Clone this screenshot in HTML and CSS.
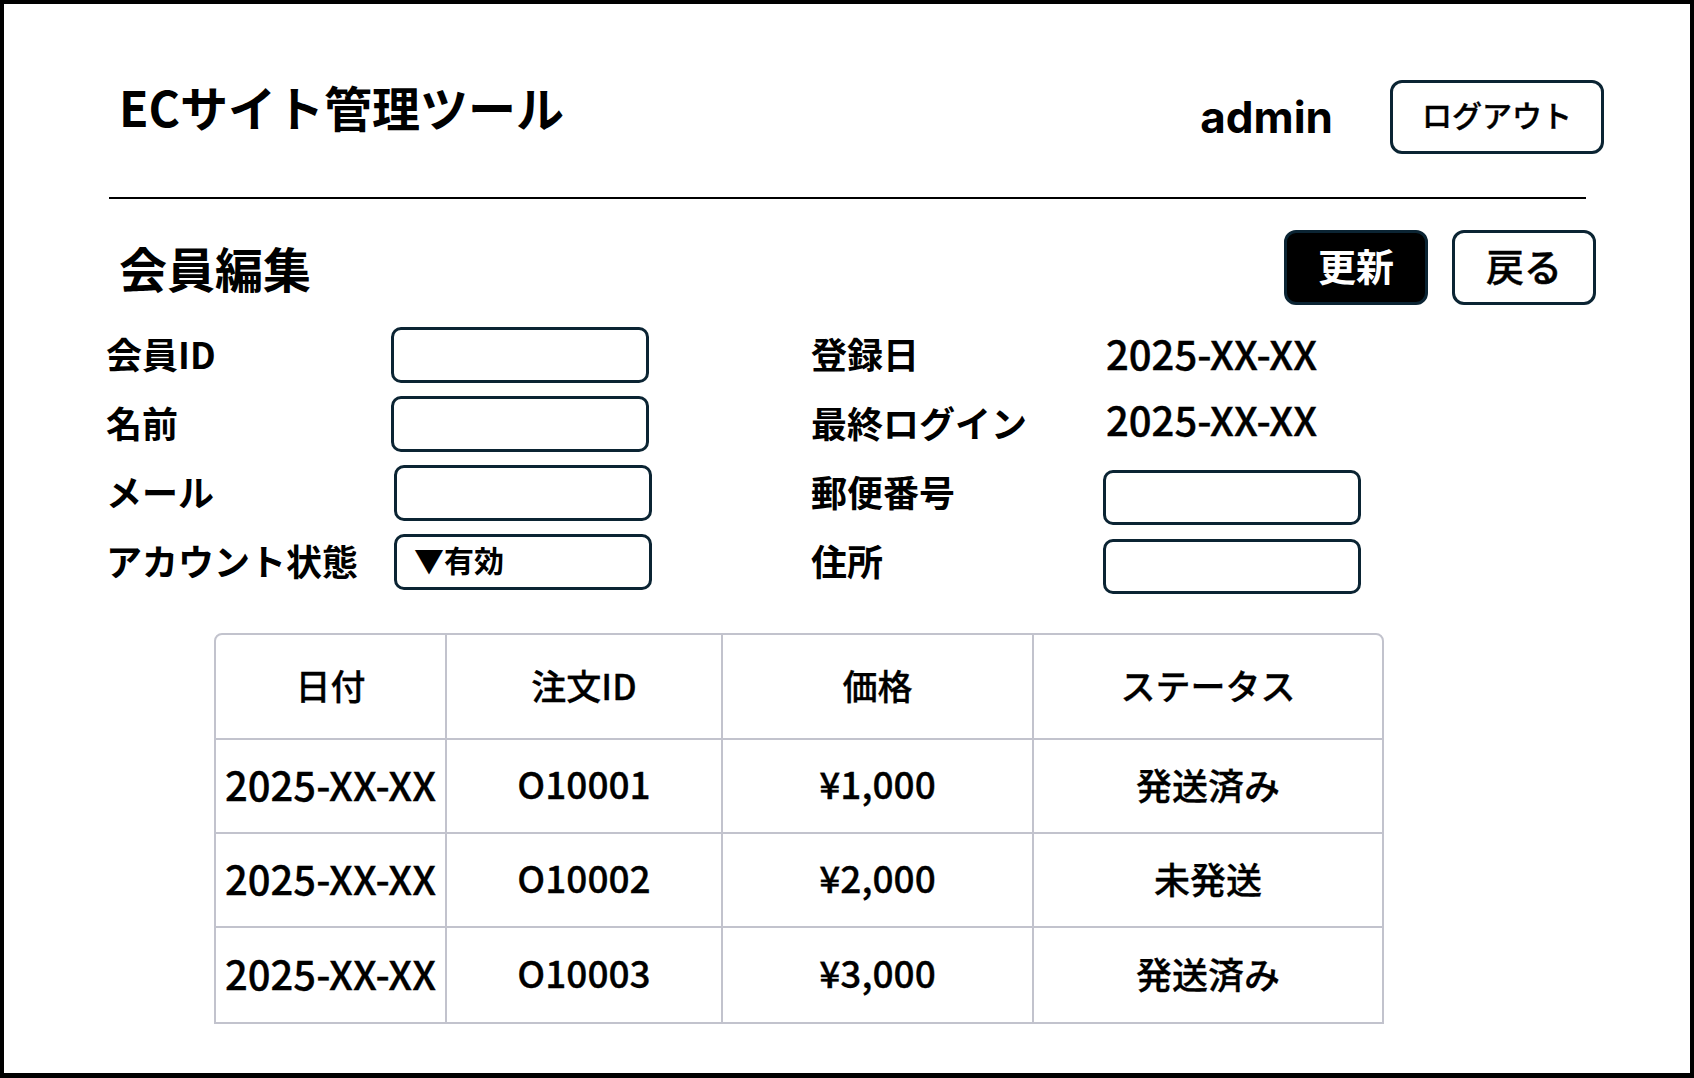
FILE: index.html
```html
<!DOCTYPE html>
<html lang="ja">
<head>
    <meta charset="UTF-8">
    <meta name="viewport" content="width=device-width, initial-scale=1.0">
    <title>会員編集 - ECサイト管理ツール</title>
    <link rel="stylesheet" href="styles.css">
</head>
<body>
    <div class="frame">
        <header class="app-header">
            <h1 class="app-title">ECサイト管理ツール</h1>
            <span class="user-name">admin</span>
            <button class="btn btn-logout">ログアウト</button>
        </header>
        <hr class="divider">

        <div class="section-head">
            <h2 class="section-title">会員編集</h2>
            <div class="actions">
                <button class="btn btn-action btn-primary">更新</button>
                <button class="btn btn-action">戻る</button>
            </div>
        </div>

        <div class="form">
            <div class="form-col form-col-left">
                <label class="form-label" for="memberId">会員ID</label>
                <input class="field" id="memberId" type="text">
                <label class="form-label" for="memberName">名前</label>
                <input class="field" id="memberName" type="text">
                <label class="form-label" for="memberMail">メール</label>
                <input class="field field-shift" id="memberMail" type="text">
                <span class="form-label">アカウント状態</span>
                <div class="field field-shift select-box">▼有効</div>
            </div>
            <div class="form-col form-col-right">
                <span class="form-label">登録日</span>
                <span class="form-value">2025-XX-XX</span>
                <span class="form-label">最終ログイン</span>
                <span class="form-value form-value-up">2025-XX-XX</span>
                <label class="form-label" for="zip">郵便番号</label>
                <input class="field" id="zip" type="text">
                <label class="form-label" for="address">住所</label>
                <input class="field" id="address" type="text">
            </div>
        </div>

        <div class="orders">
            <table class="order-table">
                <colgroup>
                    <col class="col-date">
                    <col class="col-id">
                    <col class="col-price">
                    <col class="col-status">
                </colgroup>
                <thead>
                    <tr>
                        <th>日付</th>
                        <th>注文ID</th>
                        <th>価格</th>
                        <th>ステータス</th>
                    </tr>
                </thead>
                <tbody>
                    <tr>
                        <td class="date">2025-XX-XX</td>
                        <td>O10001</td>
                        <td>¥1,000</td>
                        <td class="status">発送済み</td>
                    </tr>
                    <tr>
                        <td class="date">2025-XX-XX</td>
                        <td>O10002</td>
                        <td>¥2,000</td>
                        <td class="status">未発送</td>
                    </tr>
                    <tr>
                        <td class="date">2025-XX-XX</td>
                        <td>O10003</td>
                        <td>¥3,000</td>
                        <td class="status">発送済み</td>
                    </tr>
                </tbody>
            </table>
        </div>
    </div>
</body>
</html>
```

FILE: styles.css
```css
* {
    box-sizing: border-box;
}
body {
    margin: 0;
    background: #fff;
    color: #000;
    font-family: "Noto Sans CJK JP", "Noto Sans", sans-serif;
}
.frame {
    height: 100vh;
    border: 4px solid #000;
    border-bottom-width: 5px;
}

/* header */
.app-header {
    display: flex;
    align-items: flex-start;
    padding: 76px 86px 0 115px;
}
.app-title {
    flex: 1;
    margin: 2px 0 0;
    font-size: 48px;
    font-weight: 700;
    line-height: 48px;
}
.user-name {
    align-self: center;
    margin-right: 57px;
    font-family: Inter, "Noto Sans", sans-serif;
    font-size: 44px;
    font-weight: 700;
    line-height: 1;
}
.btn {
    background: #fff;
    color: #000;
    border: 3px solid #0b2433;
    border-radius: 12px;
    font-family: inherit;
    padding: 0;
    cursor: pointer;
}
.btn-logout {
    width: 214px;
    height: 74px;
    font-size: 30px;
    font-weight: 500;
    line-height: 1;
    padding-bottom: 6px;
    -webkit-text-stroke: 0.4px #000;
}
.divider {
    margin: 43px 0 0 105px;
    width: 1477px;
    border: none;
    border-top: 2px solid #000;
}

/* section head */
.section-head {
    display: flex;
    align-items: center;
    justify-content: space-between;
    height: 76px;
    margin-top: 30px;
    padding: 0 94px 0 115px;
}
.section-title {
    margin: 0;
    font-size: 48px;
    font-weight: 700;
    line-height: 1;
}
.actions {
    display: flex;
    gap: 24px;
}
.btn-action {
    width: 144px;
    height: 75px;
    font-size: 38px;
    font-weight: 500;
    line-height: 1;
    padding-bottom: 5px;
    -webkit-text-stroke: 0.5px #000;
}
.btn-primary {
    background: #000;
    color: #fff;
    font-weight: 700;
    -webkit-text-stroke: 0;
}

/* form */
.form {
    display: flex;
    gap: 162px;
    margin-top: 22px;
    padding-left: 102px;
}
.form-col {
    display: grid;
    grid-auto-rows: 56px;
    row-gap: 13px;
}
.form-col-left {
    grid-template-columns: 285px 258px;
}
.form-col-right {
    grid-template-columns: 292px 258px;
}
.form-label {
    align-self: center;
    padding-bottom: 5px;
    font-size: 36px;
    font-weight: 700;
    line-height: 1;
    white-space: nowrap;
}
.form-value {
    align-self: center;
    padding: 0 0 5px 3px;
    font-size: 40px;
    font-weight: 500;
    line-height: 1;
    -webkit-text-stroke: 0.4px #000;
}
.form-value-up {
    padding-bottom: 11px;
}
.field {
    width: 258px;
    height: 56px;
    border: 3px solid #0b2433;
    border-radius: 10px;
    background: #fff;
    font-family: inherit;
}
.field-shift {
    margin-left: 3px;
}
.form-col-right .field {
    margin-top: 5px;
    height: 55px;
}
.select-box {
    display: flex;
    align-items: center;
    padding: 0 0 6px 17px;
    font-size: 30px;
    font-weight: 700;
    line-height: 1;
}

/* orders */
.orders {
    margin-top: 43px;
    padding-left: 210px;
}
.order-table {
    width: 1170px;
    table-layout: fixed;
    border-collapse: separate;
    border-spacing: 0;
    border: 2px solid #c2c3cd;
    border-radius: 8px 8px 0 0;
}
.col-date { width: 231px; }
.col-id { width: 276px; }
.col-price { width: 311px; }
.col-status { width: 348px; }
.order-table th,
.order-table td {
    padding: 0 0 5px;
    text-align: center;
    border-right: 2px solid #c2c3cd;
    border-bottom: 2px solid #c2c3cd;
    line-height: 1;
    -webkit-text-stroke: 0.3px #000;
}
.order-table th:last-child,
.order-table td:last-child {
    border-right: none;
}
.order-table tbody tr:last-child td {
    border-bottom: none;
}
.order-table th {
    height: 105px;
    font-size: 35px;
    font-weight: 500;
}
.order-table td {
    height: 94px;
    font-size: 37px;
    font-weight: 500;
}
.order-table td.date {
    font-size: 40px;
}
.order-table td.status {
    font-size: 36px;
}
```
